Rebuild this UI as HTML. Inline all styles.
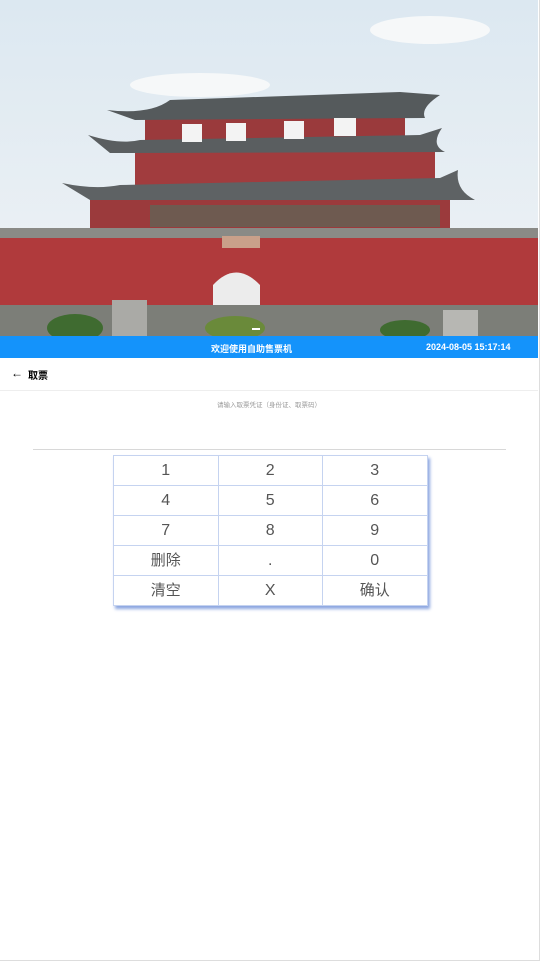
<!DOCTYPE html>
<html><head><meta charset="utf-8"><style>
*{margin:0;padding:0;box-sizing:border-box}
body{width:541px;height:963px;background:#fff;font-family:"Liberation Sans","Noto Sans CJK SC",sans-serif;position:relative;overflow:hidden}
.frame{position:absolute;left:0;top:0;width:540px;height:961px;border-right:1px solid #ddd;border-bottom:1px solid #ddd}
.bar{position:absolute;top:336px;left:0;width:538px;height:22px;background:#1493fb;color:#fff;font-size:9px;font-weight:bold}
.nav{position:absolute;top:358px;left:0;width:538px;height:33px;border-bottom:1px solid #eee;font-size:10px;font-weight:bold}
table{position:absolute;left:113px;top:455px;border-collapse:collapse;box-shadow:2px 3px 3px #8ca6e0}
td{width:104.5px;height:30px;border:1px solid #c5d3f0;text-align:center;font-size:16px;color:#555;line-height:28px;padding:0}
td.c{font-size:15px;line-height:26px;padding-top:1px}
</style></head><body>
<div class="frame"></div>
<svg style="position:absolute;left:0;top:0" width="538" height="336">
<defs><linearGradient id="s" x1="0" y1="0" x2="0" y2="1"><stop offset="0" stop-color="#dce8f1"/><stop offset="1" stop-color="#f0f3f5"/></linearGradient></defs>
<rect width="538" height="336" fill="url(#s)"/>
<ellipse cx="200" cy="85" rx="70" ry="12" fill="#f6f8f9"/>
<ellipse cx="430" cy="30" rx="60" ry="14" fill="#f6f8f9"/>
<rect x="90" y="195" width="360" height="40" fill="#9b3a3c"/>
<rect x="135" y="150" width="300" height="35" fill="#a13c3e"/>
<rect x="145" y="118" width="260" height="26" fill="#9a3a3c"/>
<path d="M107 110 Q150 115 170 100 L400 92 L440 95 Q420 108 425 118 L135 120 Z" fill="#555a5c"/>
<path d="M88 135 Q120 145 140 140 L420 135 L442 128 Q430 145 445 152 L110 153 Z" fill="#5a5e60"/>
<path d="M62 183 Q95 190 120 185 L440 178 L458 170 Q455 190 475 200 L90 200 Z" fill="#5e6264"/>
<rect x="182" y="124" width="20" height="18" fill="#f3f3f3"/><rect x="226" y="123" width="20" height="18" fill="#f3f3f3"/><rect x="284" y="121" width="20" height="18" fill="#f3f3f3"/><rect x="334" y="118" width="22" height="18" fill="#f3f3f3"/>
<rect x="150" y="205" width="290" height="22" fill="#6e5a50"/>
<rect x="0" y="228" width="538" height="10" fill="#8a8a86"/>
<rect x="0" y="238" width="538" height="75" fill="#b03a3c"/>
<rect x="222" y="236" width="38" height="12" fill="#c9a08a"/>
<path d="M213 310 L213 285 Q236 260 260 285 L260 310 Z" fill="#ececec"/>
<rect x="0" y="305" width="538" height="31" fill="#7c7e78"/>
<ellipse cx="75" cy="328" rx="28" ry="14" fill="#3f6b30"/>
<ellipse cx="235" cy="328" rx="30" ry="12" fill="#6a8a3a"/>
<ellipse cx="405" cy="330" rx="25" ry="10" fill="#3f6b30"/>
<rect x="112" y="300" width="35" height="36" fill="#aaaaa6"/>
<rect x="443" y="310" width="35" height="26" fill="#b7b7b3"/>
<rect x="252" y="328" width="8" height="2" fill="#fff"/>
</svg>
<div class="bar"><span style="position:absolute;left:211px;top:6px">欢迎使用自助售票机</span><span style="position:absolute;left:426px;top:6px">2024-08-05 15:17:14</span></div>
<div class="nav"><span style="position:absolute;left:11px;top:8px;font-weight:normal;font-size:12px">←</span><span style="position:absolute;left:28px;top:9px">取票</span></div>
<div style="position:absolute;top:399px;left:0;width:538px;text-align:center;font-size:6.5px;color:#999">请输入取票凭证（身份证、取票码）</div>
<div style="position:absolute;top:449px;left:33px;width:473px;height:1px;background:#d8d8d8"></div>
<table>
<tr><td>1</td><td>2</td><td>3</td></tr>
<tr><td>4</td><td>5</td><td>6</td></tr>
<tr><td>7</td><td>8</td><td>9</td></tr>
<tr><td class="c">删除</td><td>.</td><td>0</td></tr>
<tr><td class="c">清空</td><td>X</td><td class="c">确认</td></tr>
</table>
</body></html>
